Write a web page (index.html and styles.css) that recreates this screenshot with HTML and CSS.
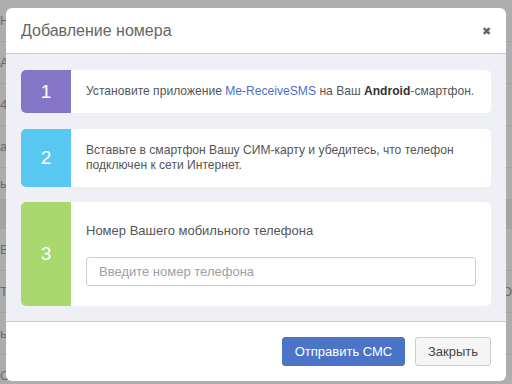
FILE: index.html
```html
<!DOCTYPE html>
<html lang="ru">
<head>
  <meta charset="UTF-8">
  <title>Добавление номера</title>
  <link rel="stylesheet" href="styles.css">
</head>
<body>
  <div class="page">
    <div class="row"><span>Н</span></div>
    <div class="row"><span>Ас</span></div>
    <div class="row"><span>4</span></div>
    <div class="row"><span>а</span></div>
    <div class="row row-short"><span>ь</span></div>
    <div class="row row-dark"></div>
    <div class="row"><span>Ва</span></div>
    <div class="row"><span>Тк</span><span class="right">О</span></div>
    <div class="row"><span>ь</span></div>
    <div class="row"><span>ОІ</span></div>
  </div>

  <div class="modal">
    <div class="modal-header">
      <h4 class="modal-title">Добавление номера</h4>
      <span class="close">&#10006;</span>
    </div>
    <div class="modal-body">
      <div class="step step-one">
        <div class="step-num step-purple">1</div>
        <div class="step-text">
          <p>Установите приложение <a href="#">Me-ReceiveSMS</a> на Ваш <b>Android</b>-смартфон.</p>
        </div>
      </div>
      <div class="step step-two">
        <div class="step-num step-blue">2</div>
        <div class="step-text">
          <p>Вставьте в смартфон Вашу СИМ-карту и убедитесь, что телефон подключен к сети Интернет.</p>
        </div>
      </div>
      <div class="step step-three">
        <div class="step-num step-green">3</div>
        <div class="step-text step-form">
          <label class="phone-label">Номер Вашего мобильного телефона</label>
          <input class="phone-input" type="text" placeholder="Введите номер телефона">
        </div>
      </div>
    </div>
    <div class="modal-footer">
      <button class="btn btn-primary">Отправить СМС</button>
      <button class="btn btn-default">Закрыть</button>
    </div>
  </div>
</body>
</html>
```

FILE: styles.css
```css
body {
  margin: 0;
  width: 512px;
  height: 384px;
  overflow: hidden;
  background-color: #adadad;
  font-family: "Liberation Sans", Arial, sans-serif;
  position: relative;
}

/* page behind the dimmed backdrop */
.page {
  display: flex;
  flex-direction: column;
}

.row {
  height: 41px;
  border-bottom: 1px solid #a2a2a2;
  display: flex;
  align-items: center;
  justify-content: space-between;
  font-size: 13px;
  color: #6a6a6a;
}

.row-short {
  height: 31px;
}

.row-dark {
  height: 28px;
  background-color: #a4a4a4;
}

/* modal */
.modal {
  position: absolute;
  top: 8px;
  left: 6px;
  width: 500px;
  background-color: #fff;
  border-radius: 6px;
  overflow: hidden;
}

.modal-header {
  height: 45px;
  display: flex;
  align-items: center;
  justify-content: space-between;
  padding: 0 15px;
  border-bottom: 1px solid #c6c8dd;
}

.modal-title {
  margin: 0;
  font-size: 16px;
  font-weight: normal;
  color: #666;
}

.close {
  font-size: 11px;
  color: #666;
  margin-top: 1px;
}

.modal-body {
  background-color: #eff0f5;
  padding: 16px 15px 15px;
  display: flex;
  flex-direction: column;
  gap: 15px;
  border-bottom: 1px solid #c6c8dd;
}

.step {
  display: flex;
  background-color: #fff;
  border-radius: 5px;
  overflow: hidden;
}

.step-one { height: 43px; margin-bottom: 1px; }
.step-two { height: 58px; }
.step-three { height: 104px; }

.step-num {
  width: 50px;
  flex-shrink: 0;
  display: flex;
  align-items: center;
  justify-content: center;
  color: #fff;
  font-size: 19px;
}

.step-purple { background-color: #8575c7; }
.step-blue { background-color: #58c8f3; }
.step-green { background-color: #a8d86e; }

.step-text {
  flex: 1;
  display: flex;
  align-items: center;
  padding: 0 10px 0 15px;
  font-size: 12.1px;
  line-height: 15px;
  color: #555;
}

.step-text p {
  margin: 0;
}

.step-text a {
  color: #4a6fc8;
  text-decoration: none;
}

.step-text b {
  color: #333;
}

.step-form {
  flex-direction: column;
  align-items: stretch;
  justify-content: center;
  gap: 19px;
  padding: 0 15px;
}

.phone-label {
  font-size: 13px;
  color: #555;
}

.phone-input {
  height: 29px;
  box-sizing: border-box;
  border: 1px solid #ccc;
  border-radius: 3px;
  padding: 0 12px;
  font-family: "Liberation Sans", Arial, sans-serif;
  font-size: 13px;
  color: #555;
}

.phone-input::placeholder {
  color: #a0a0a0;
}

.modal-footer {
  height: 59px;
  display: flex;
  align-items: center;
  justify-content: flex-end;
  gap: 10px;
  padding: 0 15px;
}

.btn {
  height: 29px;
  border-radius: 3px;
  font-family: "Liberation Sans", Arial, sans-serif;
  font-size: 13px;
  padding: 0;
  white-space: nowrap;
}

.btn-primary {
  width: 123px;
  background-color: #4b73c6;
  border: 1px solid #4b73c6;
  color: #fff;
}

.btn-default {
  width: 76px;
  background-color: #f5f5f5;
  border: 1px solid #ccc;
  color: #444;
}
```
